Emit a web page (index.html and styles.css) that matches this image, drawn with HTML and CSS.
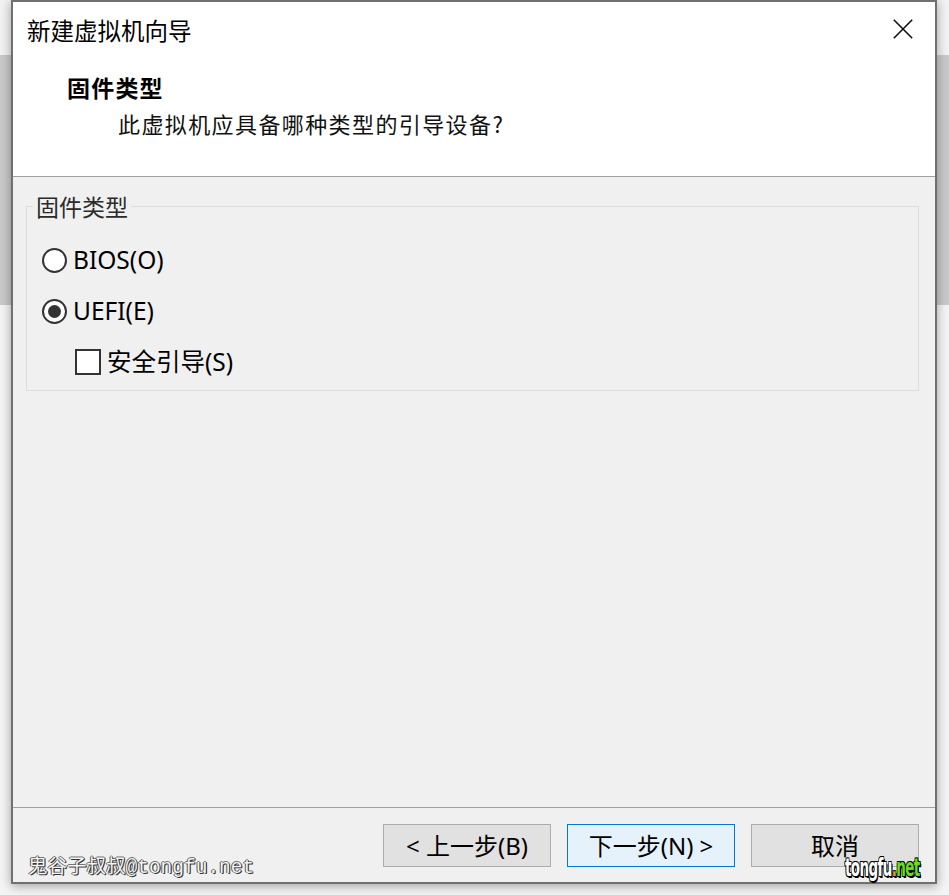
FILE: index.html
```html
<!DOCTYPE html>
<html lang="zh-CN">
<head>
<meta charset="utf-8">
<title>新建虚拟机向导</title>
<link rel="stylesheet" href="styles.css">
</head>
<body>
<div class="dialog">
  <header class="head">
    <div class="titlebar">
      <span class="title">新建虚拟机向导</span>
      <svg class="close" width="20" height="20" viewBox="0 0 20 20" aria-hidden="true">
        <path d="M0.8 0.8L19.2 19.2M19.2 0.8L0.8 19.2" stroke="#111" stroke-width="1.6" fill="none"/>
      </svg>
    </div>
    <div class="heading">固件类型</div>
    <div class="subheading">此虚拟机应具备哪种类型的引导设备?</div>
  </header>
  <main class="content">
    <fieldset class="group">
      <legend class="group-title">固件类型</legend>
      <div class="option"><span class="radio"></span><span class="label">BIOS(O)</span></div>
      <div class="option"><span class="radio checked"><span class="dot"></span></span><span class="label">UEFI(E)</span></div>
      <div class="option sub"><span class="check"></span><span class="label">安全引导(S)</span></div>
    </fieldset>
  </main>
  <footer class="foot">
    <button class="btn">&lt; 上一步(B)</button>
    <button class="btn primary">下一步(N) &gt;</button>
    <button class="btn">取消</button>
    <span class="wm-left">鬼谷子叔叔@tongfu.net</span>
    <span class="wm-right">tongfu<span class="wm-dot">.</span><span class="wm-net">net</span></span>
  </footer>
</div>
</body>
</html>
```

FILE: styles.css
```css
html, body {
  margin: 0;
  padding: 0;
}
body {
  width: 949px;
  height: 895px;
  overflow: hidden;
  background: linear-gradient(to bottom, #f2f2f2 0, #f2f2f2 55px, #c9c9c9 55px, #c9c9c9 305px, #f4f4f4 305px);
  font-family: "Noto Sans", "Noto Sans CJK SC", sans-serif;
  color: #000;
}
.dialog {
  position: relative;
  margin-left: 11px;
  width: 926px;
  height: 884px;
  box-sizing: border-box;
  border: 2px solid #707070;
  background: #f0f0f0;
  display: flex;
  flex-direction: column;
  box-shadow: 0 2px 10px rgba(0, 0, 0, 0.35);
}
.head {
  background: #fff;
  height: 175px;
  box-sizing: border-box;
  border-bottom: 1px solid #a0a0a0;
  padding-top: 16px;
}
.titlebar {
  display: flex;
  justify-content: space-between;
  align-items: flex-start;
  padding-left: 14px;
  padding-right: 22px;
}
.title {
  font-family: "Noto Sans CJK SC", sans-serif;
  font-size: 23.5px;
  line-height: 24px;
}
.close {
  display: block;
  margin-top: 1px;
}
.heading {
  margin-top: 33px;
  padding-left: 54px;
  font-family: "Noto Sans CJK SC", sans-serif;
  font-weight: bold;
  font-size: 23px;
  line-height: 24px;
  letter-spacing: 1.2px;
}
.subheading {
  margin-top: 12px;
  padding-left: 105px;
  font-family: "Noto Sans CJK SC", sans-serif;
  font-size: 22px;
  line-height: 24px;
  letter-spacing: 1.4px;
  color: #111;
}
.content {
  flex: 1;
  padding-top: 18px;
}
.group {
  margin: 0 16px 0 13px;
  padding: 29px 0 15px 15px;
  border: 1px solid #dcdcdc;
  display: flex;
  flex-direction: column;
  gap: 25px;
  min-width: 0;
}
.group-title {
  margin-left: -9px;
  padding: 0 3px;
  font-family: "Noto Sans CJK SC", sans-serif;
  font-size: 23px;
  line-height: 23px;
  color: #2b2b2b;
}
.option {
  display: flex;
  align-items: center;
  height: 26px;
}
.option.sub {
  padding-left: 33px;
}
.label {
  font-size: 24.5px;
  line-height: 26px;
  color: #000;
}
.radio {
  width: 25px;
  height: 25px;
  box-sizing: border-box;
  border: 2px solid #333;
  border-radius: 50%;
  background: #fff;
  display: flex;
  align-items: center;
  justify-content: center;
  margin-right: 6px;
  flex: none;
}
.dot {
  width: 13px;
  height: 13px;
  border-radius: 50%;
  background: #333;
}
.check {
  width: 26px;
  height: 26px;
  box-sizing: border-box;
  border: 2px solid #333;
  background: #fff;
  margin-right: 6px;
  flex: none;
}
.foot {
  position: relative;
  height: 75px;
  box-sizing: border-box;
  border-top: 1px solid #a0a0a0;
  display: flex;
  justify-content: flex-end;
  align-items: flex-start;
  gap: 16px;
  padding: 16px 16px 0 0;
}
.btn {
  width: 168px;
  height: 43px;
  box-sizing: border-box;
  border: 1px solid #adadad;
  background: #e1e1e1;
  font-family: "Noto Sans", "Noto Sans CJK SC", sans-serif;
  font-size: 24px;
  line-height: 26px;
  color: #000;
  padding: 0;
}
.btn.primary {
  background: #e5f1fb;
  border-color: #0078d7;
}
.wm-left {
  position: absolute;
  left: 15px;
  top: 49px;
  font-family: "Liberation Mono", "Noto Sans CJK SC", monospace;
  font-size: 19.5px;
  line-height: 22px;
  color: #f4f4f4;
  text-shadow: 1px 1px 0 #333, -1px 0 0 #555, 0 -1px 0 #777, 1px 0 0 #444;
}
.wm-right {
  position: absolute;
  right: 15px;
  top: 48px;
  font-family: "DejaVu Sans Condensed", "DejaVu Sans", sans-serif;
  font-weight: bold;
  font-size: 25px;
  line-height: 24px;
  letter-spacing: -1px;
  color: #fff;
  transform: scaleX(0.6);
  transform-origin: right center;
  text-shadow: 1px 1px 0 #000, -1px -1px 0 #000, 1px -1px 0 #000, -1px 1px 0 #000, 2px 2px 0 #000;
}
.wm-dot {
  color: #f0a020;
}
.wm-net {
  color: #66dd22;
}
```
